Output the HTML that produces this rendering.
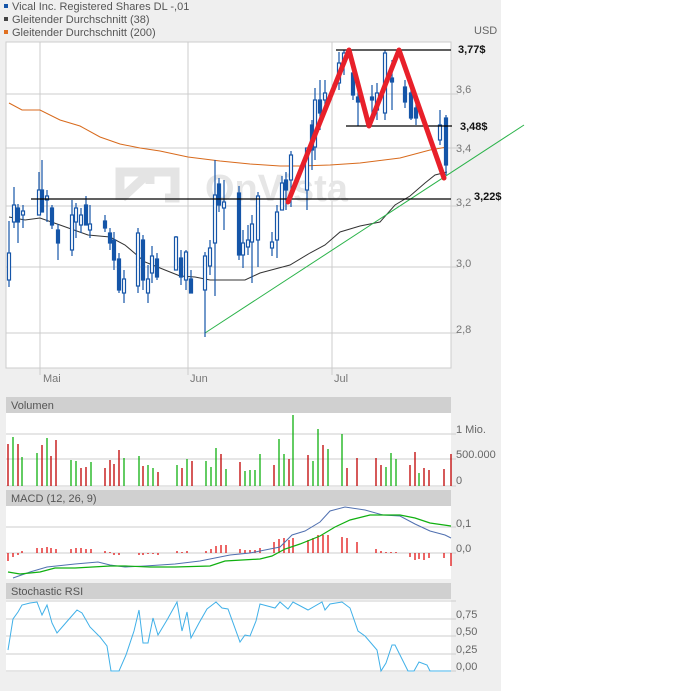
<!DOCTYPE html>
<html><head><meta charset="utf-8"><style>
body{margin:0;width:688px;height:691px;background:#fff;overflow:hidden;font-family:"Liberation Sans",sans-serif}
</style></head><body>
<svg width="688" height="691" xmlns="http://www.w3.org/2000/svg" font-family="Liberation Sans, sans-serif">
<rect x="0" y="0" width="501" height="691" fill="#efefef"/>
<!-- legend -->
<rect x="4" y="4" width="4" height="4" fill="#1555a8"/><text x="12" y="10" font-size="11" fill="#555">Vical Inc. Registered Shares DL -,01</text>
<rect x="4" y="17" width="4" height="4" fill="#444"/><text x="12" y="23" font-size="11" fill="#555">Gleitender Durchschnitt (38)</text>
<rect x="4" y="30" width="4" height="4" fill="#e07020"/><text x="12" y="36" font-size="11" fill="#555">Gleitender Durchschnitt (200)</text>
<text x="474" y="34" font-size="11" fill="#666">USD</text>
<!-- main panel -->
<rect x="6" y="42" width="445" height="326" fill="#fff" stroke="#ccc"/>
<g stroke="#ccc" stroke-width="1">
<line x1="6" y1="94" x2="458" y2="94"/><line x1="6" y1="148" x2="458" y2="148"/><line x1="6" y1="206" x2="458" y2="206"/><line x1="6" y1="267" x2="458" y2="267"/><line x1="6" y1="333" x2="458" y2="333"/>
<line x1="40" y1="42" x2="40" y2="375"/><line x1="188" y1="42" x2="188" y2="375"/><line x1="332" y1="42" x2="332" y2="375"/>
</g>
<g font-size="11" fill="#777"><text x="456" y="93">3,6</text><text x="456" y="152">3,4</text><text x="456" y="206">3,2</text><text x="456" y="267">3,0</text><text x="456" y="333">2,8</text>
<text x="43" y="382">Mai</text><text x="190" y="382">Jun</text><text x="334" y="382">Jul</text></g>
<!-- watermark -->
<g fill="none" stroke="#e4e4e4" stroke-width="9"><path d="M120 200 V172 H175 V198 H165"/><path d="M122 198 L150 172 M138 172 H150 V184"/></g>
<text x="205" y="201" font-size="38" font-weight="bold" fill="#e6e6e6">OnVista</text>
<!-- MAs -->
<polyline fill="none" stroke="#d86a1c" points="9,103 22,110 40,110 60,120 80,126 100,137 120,144 140,148 160,151 188,157 220,161 250,164 280,166 300,166 330,165 360,163 400,158 430,150 447,147"/>
<polyline fill="none" stroke="#333" points="9,217 25,220 40,218 60,225 88,235 110,237 125,245 145,262 165,270 180,276 195,277 210,280 245,280 260,273 275,269 290,265 310,253 325,245 340,232 360,226 380,222 395,205 410,196 425,183 435,175 447,172"/>
<line x1="205" y1="333" x2="524" y2="125" stroke="#2bb34a"/>
<!-- candles -->
<g stroke="#1555a8" stroke-width="1.2" fill="#fff">
<line x1="9" y1="221" x2="9" y2="287"/><rect x="7.5" y="253" width="3" height="27"/>
<line x1="14" y1="187" x2="14" y2="228"/><rect x="12.5" y="205" width="3" height="17"/>
<line x1="18" y1="204" x2="18" y2="243"/><rect x="16.5" y="208" width="3" height="14" fill="#1555a8"/>
<line x1="23" y1="205" x2="23" y2="228"/><rect x="21.5" y="211" width="3" height="4"/>
<line x1="39" y1="172" x2="39" y2="215"/><rect x="37.5" y="190" width="3" height="25"/>
<line x1="42" y1="160" x2="42" y2="212"/><rect x="40.5" y="190" width="3" height="22" fill="#1555a8"/>
<line x1="47" y1="190" x2="47" y2="222"/><rect x="45.5" y="196" width="3" height="4"/>
<line x1="52" y1="205" x2="52" y2="229"/><rect x="50.5" y="208" width="3" height="17" fill="#1555a8"/>
<line x1="58" y1="224" x2="58" y2="260"/><rect x="56.5" y="230" width="3" height="13" fill="#1555a8"/>
<line x1="72" y1="200" x2="72" y2="256"/><rect x="70.5" y="215" width="3" height="35"/>
<line x1="76" y1="203" x2="76" y2="238"/><rect x="74.5" y="208" width="3" height="14"/>
<line x1="81" y1="208" x2="81" y2="233"/><rect x="79.5" y="215" width="3" height="10"/>
<line x1="86" y1="196" x2="86" y2="225"/><rect x="84.5" y="205" width="3" height="20" fill="#1555a8"/>
<line x1="90" y1="205" x2="90" y2="238"/><rect x="88.5" y="224" width="3" height="6"/>
<line x1="105" y1="215" x2="105" y2="232"/><rect x="103.5" y="221" width="3" height="7" fill="#1555a8"/>
<line x1="110" y1="228" x2="110" y2="250"/><rect x="108.5" y="233" width="3" height="10" fill="#1555a8"/>
<line x1="114" y1="232" x2="114" y2="270"/><rect x="112.5" y="240" width="3" height="20" fill="#1555a8"/>
<line x1="119" y1="253" x2="119" y2="293"/><rect x="117.5" y="259" width="3" height="31" fill="#1555a8"/>
<line x1="124" y1="270" x2="124" y2="303"/><rect x="122.5" y="279" width="3" height="14"/>
<line x1="138" y1="228" x2="138" y2="293"/><rect x="136.5" y="233" width="3" height="53"/>
<line x1="143" y1="235" x2="143" y2="290"/><rect x="141.5" y="240" width="3" height="40" fill="#1555a8"/>
<line x1="148" y1="265" x2="148" y2="303"/><rect x="146.5" y="279" width="3" height="14"/>
<line x1="152" y1="246" x2="152" y2="283"/><rect x="150.5" y="256" width="3" height="17"/>
<line x1="157" y1="253" x2="157" y2="280"/><rect x="155.5" y="259" width="3" height="18" fill="#1555a8"/>
<line x1="176" y1="236" x2="176" y2="270"/><rect x="174.5" y="237" width="3" height="33"/>
<line x1="181" y1="250" x2="181" y2="285"/><rect x="179.5" y="258" width="3" height="19" fill="#1555a8"/>
<line x1="186" y1="250" x2="186" y2="290"/><rect x="184.5" y="252" width="3" height="28"/>
<line x1="191" y1="270" x2="191" y2="293"/><rect x="189.5" y="279" width="3" height="14" fill="#1555a8"/>
<line x1="205" y1="252" x2="205" y2="337"/><rect x="203.5" y="256" width="3" height="34"/>
<line x1="210" y1="240" x2="210" y2="275"/><rect x="208.5" y="248" width="3" height="18"/>
<line x1="215" y1="160" x2="215" y2="296"/><rect x="213.5" y="195" width="3" height="48"/>
<line x1="219" y1="178" x2="219" y2="212"/><rect x="217.5" y="184" width="3" height="21" fill="#1555a8"/>
<line x1="224" y1="180" x2="224" y2="230"/><rect x="222.5" y="202" width="3" height="6"/>
<line x1="239" y1="186" x2="239" y2="260"/><rect x="237.5" y="193" width="3" height="62" fill="#1555a8"/>
<line x1="243" y1="230" x2="243" y2="268"/><rect x="241.5" y="243" width="3" height="12"/>
<line x1="248" y1="225" x2="248" y2="255"/><rect x="246.5" y="240" width="3" height="7"/>
<line x1="252" y1="215" x2="252" y2="283"/><rect x="250.5" y="224" width="3" height="18"/>
<line x1="258" y1="192" x2="258" y2="267"/><rect x="256.5" y="196" width="3" height="44"/>
<line x1="272" y1="232" x2="272" y2="256"/><rect x="270.5" y="242" width="3" height="6"/>
<line x1="277" y1="205" x2="277" y2="258"/><rect x="275.5" y="212" width="3" height="28"/>
<line x1="282" y1="176" x2="282" y2="210"/><rect x="280.5" y="183" width="3" height="27"/>
<line x1="286" y1="172" x2="286" y2="210"/><rect x="284.5" y="180" width="3" height="10" fill="#1555a8"/>
<line x1="291" y1="151" x2="291" y2="207"/><rect x="289.5" y="155" width="3" height="25"/>
<line x1="307" y1="148" x2="307" y2="210"/><rect x="305.5" y="148" width="3" height="42"/>
<line x1="312" y1="120" x2="312" y2="170"/><rect x="310.5" y="125" width="3" height="25" fill="#1555a8"/>
<line x1="315" y1="88" x2="315" y2="160"/><rect x="313.5" y="100" width="3" height="47"/>
<line x1="320" y1="80" x2="320" y2="130"/><rect x="318.5" y="100" width="3" height="13" fill="#1555a8"/>
<line x1="325" y1="80" x2="325" y2="110"/><rect x="323.5" y="93" width="3" height="7"/>
<line x1="339" y1="52" x2="339" y2="90"/><rect x="337.5" y="63" width="3" height="20"/>
<line x1="344" y1="50" x2="344" y2="75"/><rect x="342.5" y="53" width="3" height="10"/>
<line x1="353" y1="60" x2="353" y2="100"/><rect x="351.5" y="73" width="3" height="22" fill="#1555a8"/>
<line x1="358" y1="90" x2="358" y2="126"/><rect x="356.5" y="97" width="3" height="5" fill="#1555a8"/>
<line x1="372" y1="85" x2="372" y2="115"/><rect x="370.5" y="97" width="3" height="3" fill="#1555a8"/>
<line x1="377" y1="83" x2="377" y2="120"/><rect x="375.5" y="93" width="3" height="17"/>
<line x1="385" y1="50" x2="385" y2="120"/><rect x="383.5" y="53" width="3" height="60"/>
<line x1="392" y1="60" x2="392" y2="110"/><rect x="390.5" y="78" width="3" height="4" fill="#1555a8"/>
<line x1="405" y1="80" x2="405" y2="108"/><rect x="403.5" y="87" width="3" height="15" fill="#1555a8"/>
<line x1="411" y1="85" x2="411" y2="120"/><rect x="409.5" y="93" width="3" height="25" fill="#1555a8"/>
<line x1="416" y1="100" x2="416" y2="125"/><rect x="414.5" y="108" width="3" height="10" fill="#1555a8"/>
<line x1="440" y1="110" x2="440" y2="145"/><rect x="438.5" y="125" width="3" height="15"/>
<line x1="446" y1="115" x2="446" y2="175"/><rect x="444.5" y="118" width="3" height="47" fill="#1555a8"/>
</g>
<!-- annotations -->
<g stroke="#000" stroke-width="1.3"><line x1="336" y1="50" x2="451" y2="50"/><line x1="346" y1="126" x2="452" y2="126"/><line x1="31" y1="199" x2="451" y2="199"/></g>
<polyline fill="none" stroke="#e8202a" stroke-width="5" stroke-linejoin="round" stroke-linecap="round" points="288,202 349,50 369,126 399,50 444,178"/>
<g font-size="11" font-weight="bold" fill="#111"><text x="458" y="53">3,77$</text><text x="460" y="130">3,48$</text><text x="474" y="200">3,22$</text></g>
<!-- volume -->
<rect x="6" y="397" width="445" height="16" fill="#d0d0d0"/><text x="11" y="409" font-size="11" fill="#555">Volumen</text>
<rect x="6" y="413" width="445" height="74" fill="#fff"/>
<g stroke="#ccc"><line x1="6" y1="434" x2="456" y2="434"/><line x1="6" y1="459" x2="456" y2="459"/><line x1="6" y1="486" x2="456" y2="486"/></g>
<g font-size="11" fill="#666"><text x="456" y="433">1 Mio.</text><text x="456" y="458">500.000</text><text x="456" y="484">0</text></g>
<g stroke-width="1.3">
<g stroke="#c00000"><path d="M8 486V444M18 486V444M42 486V445M51 486V456M56 486V440M81 486V468M86 486V467M105 486V468M110 486V460M114 486V464M119 486V450M143 486V466M158 486V472M182 486V468M192 486V461M221 486V454M240 486V462M274 486V465M289 486V459M308 486V455M323 486V445M347 486V468M357 486V458M376 486V458M381 486V465M410 486V465M415 486V452M424 486V468M429 486V470M444 486V469M451 486V454"/></g>
<g stroke="#10b010"><path d="M13 486V437M22 486V457M37 486V453M47 486V438M71 486V460M76 486V461M91 486V462M124 486V458M139 486V456M148 486V465M153 486V468M177 486V465M187 486V459M206 486V461M211 486V467M216 486V448M226 486V469M245 486V471M250 486V470M255 486V470M260 486V454M279 486V439M284 486V454M293 486V415M313 486V461M318 486V429M328 486V449M342 486V434M386 486V467M391 486V453M396 486V459M419 486V473"/></g>
</g>
<!-- MACD -->
<rect x="6" y="490" width="445" height="16" fill="#d0d0d0"/><text x="11" y="502" font-size="11" fill="#555">MACD (12, 26, 9)</text>
<rect x="6" y="506" width="445" height="73" fill="#fff"/>
<g stroke="#ccc"><line x1="6" y1="527" x2="456" y2="527"/><line x1="6" y1="553" x2="456" y2="553"/></g>
<g font-size="11" fill="#666"><text x="456" y="527">0,1</text><text x="456" y="552">0,0</text></g>
<path stroke="#e00000" stroke-width="1.2" d="M8 553V561M13 553V557M18 553V555M22 553V551M37 553V548M42 553V548M47 553V547M51 553V548M56 553V549M71 553V549M76 553V548M81 553V548M86 553V549M91 553V549M105 553V551M110 553V552M114 553V555M119 553V555M139 553V555M143 553V555M148 553V554M153 553V554M158 553V555M177 553V551M182 553V552M187 553V551M206 553V551M211 553V549M216 553V546M221 553V545M226 553V545M240 553V549M245 553V550M250 553V550M255 553V550M260 553V548M274 553V542M279 553V539M284 553V538M289 553V540M293 553V538M308 553V540M313 553V538M318 553V535M323 553V535M328 553V535M342 553V537M347 553V538M357 553V542M376 553V549M381 553V551M386 553V552M391 553V552M396 553V552M410 553V557M415 553V560M419 553V559M424 553V560M429 553V558M444 553V558M451 553V566"/>
<polyline fill="none" stroke="#5070b0" points="13,578 30,572 47,567 75,564 98,562 110,565 125,567 145,566 175,564 200,561 215,558 230,555 250,553 265,550 280,547 292,535 305,531 320,522 330,511 345,507 365,510 383,515 400,516 415,524 430,531 445,535 451,538"/>
<polyline fill="none" stroke="#10b010" stroke-width="1.2" points="8,572 20,574 40,572 55,568 75,568 110,566 125,566 150,567 175,567 210,566 225,561 260,559 272,556 285,549 300,544 320,536 335,527 350,520 370,515 400,515 415,518 430,523 451,526"/>
<!-- Stoch RSI -->
<rect x="6" y="583" width="445" height="16" fill="#d0d0d0"/><text x="11" y="595" font-size="11" fill="#555">Stochastic RSI</text>
<rect x="6" y="600" width="445" height="72" fill="#fff"/>
<g stroke="#ccc"><line x1="6" y1="601" x2="456" y2="601"/><line x1="6" y1="619" x2="456" y2="619"/><line x1="6" y1="636" x2="456" y2="636"/><line x1="6" y1="654" x2="456" y2="654"/><line x1="6" y1="671" x2="456" y2="671"/></g>
<g font-size="11" fill="#666"><text x="456" y="618">0,75</text><text x="456" y="635">0,50</text><text x="456" y="653">0,25</text><text x="456" y="670">0,00</text></g>
<polyline fill="none" stroke="#40b0e8" points="8,650 13,619 18,612 22,605 30,603 37,602 42,615 47,605 52,623 57,633 70,618 77,610 82,613 90,627 100,637 107,646 111,671 119,671 126,655 134,631 139,610 143,643 148,643 153,618 158,635 167,620 177,602 182,631 187,612 191,638 199,623 207,609 216,602 222,608 228,609 240,642 245,635 250,636 256,621 260,604 275,608 280,602 288,609 293,602 308,610 322,602 325,610 330,604 342,602 350,608 358,631 365,636 377,650 381,671 386,663 392,645 395,645 408,671 414,671 419,662 427,665 430,671 451,671"/>
</svg>
</body></html>
